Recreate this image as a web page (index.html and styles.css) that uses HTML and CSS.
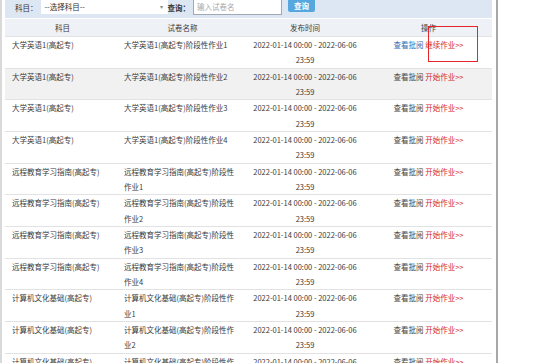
FILE: index.html
```html
<!DOCTYPE html>
<html lang="zh-CN">
<head>
<meta charset="utf-8">
<title>作业列表</title>
<link rel="stylesheet" href="styles.css">
</head>
<body>
<div class="frame">
  <div class="edge"></div>
  <div class="panel">
    <div class="toolbar">
      <span class="label">科目：</span>
      <div class="select"><span>--选择科目--</span><span class="arrow">▾</span></div>
      <span class="label strong">查询：</span>
      <div class="input">输入试卷名</div>
      <div class="btn">查询</div>
    </div>
    <table class="list">
      <colgroup><col class="c1"><col class="c2"><col class="c3"><col class="c4"></colgroup>
      <thead>
        <tr><th>科目</th><th>试卷名称</th><th>发布时间</th><th>操作</th></tr>
      </thead>
      <tbody>
        <tr><td class="subj">大学英语1(高起专)</td><td class="name">大学英语1(高起专)阶段性作业1</td><td class="time">2022-01-14 00:00 - 2022-06-06 23:59</td><td class="ops"><span class="view blue">查看批阅</span> <span class="go">继续作业&gt;&gt;</span></td></tr>
        <tr class="hover"><td class="subj">大学英语1(高起专)</td><td class="name">大学英语1(高起专)阶段性作业2</td><td class="time">2022-01-14 00:00 - 2022-06-06 23:59</td><td class="ops"><span class="view">查看批阅</span> <span class="go">开始作业&gt;&gt;</span></td></tr>
        <tr><td class="subj">大学英语1(高起专)</td><td class="name">大学英语1(高起专)阶段性作业3</td><td class="time">2022-01-14 00:00 - 2022-06-06 23:59</td><td class="ops"><span class="view">查看批阅</span> <span class="go">开始作业&gt;&gt;</span></td></tr>
        <tr><td class="subj">大学英语1(高起专)</td><td class="name">大学英语1(高起专)阶段性作业4</td><td class="time">2022-01-14 00:00 - 2022-06-06 23:59</td><td class="ops"><span class="view">查看批阅</span> <span class="go">开始作业&gt;&gt;</span></td></tr>
        <tr><td class="subj">远程教育学习指南(高起专)</td><td class="name">远程教育学习指南(高起专)阶段性作业1</td><td class="time">2022-01-14 00:00 - 2022-06-06 23:59</td><td class="ops"><span class="view">查看批阅</span> <span class="go">开始作业&gt;&gt;</span></td></tr>
        <tr><td class="subj">远程教育学习指南(高起专)</td><td class="name">远程教育学习指南(高起专)阶段性作业2</td><td class="time">2022-01-14 00:00 - 2022-06-06 23:59</td><td class="ops"><span class="view">查看批阅</span> <span class="go">开始作业&gt;&gt;</span></td></tr>
        <tr><td class="subj">远程教育学习指南(高起专)</td><td class="name">远程教育学习指南(高起专)阶段性作业3</td><td class="time">2022-01-14 00:00 - 2022-06-06 23:59</td><td class="ops"><span class="view">查看批阅</span> <span class="go">开始作业&gt;&gt;</span></td></tr>
        <tr><td class="subj">远程教育学习指南(高起专)</td><td class="name">远程教育学习指南(高起专)阶段性作业4</td><td class="time">2022-01-14 00:00 - 2022-06-06 23:59</td><td class="ops"><span class="view">查看批阅</span> <span class="go">开始作业&gt;&gt;</span></td></tr>
        <tr><td class="subj">计算机文化基础(高起专)</td><td class="name">计算机文化基础(高起专)阶段性作业1</td><td class="time">2022-01-14 00:00 - 2022-06-06 23:59</td><td class="ops"><span class="view">查看批阅</span> <span class="go">开始作业&gt;&gt;</span></td></tr>
        <tr><td class="subj">计算机文化基础(高起专)</td><td class="name">计算机文化基础(高起专)阶段性作业2</td><td class="time">2022-01-14 00:00 - 2022-06-06 23:59</td><td class="ops"><span class="view">查看批阅</span> <span class="go">开始作业&gt;&gt;</span></td></tr>
        <tr><td class="subj">计算机文化基础(高起专)</td><td class="name">计算机文化基础(高起专)阶段性作业3</td><td class="time">2022-01-14 00:00 - 2022-06-06 23:59</td><td class="ops"><span class="view">查看批阅</span> <span class="go">开始作业&gt;&gt;</span></td></tr>
      </tbody>
    </table>
  </div>
  <div class="gap"></div>
  <div class="vline"></div>
</div>
<div class="annot"></div>
</body>
</html>
```
FILE: styles.css
```css
html, body {
  margin: 0;
  padding: 0;
  background: #ffffff;
  overflow: hidden;
}
body {
  position: relative;
  width: 553px;
  height: 363px;
  font-family: "Noto Sans CJK SC", "Noto Sans", sans-serif;
  font-size: 7.5px;
  color: #3a3a3a;
}
.frame {
  display: flex;
  height: 363px;
}
.edge {
  width: 2px;
  background: #d9d9d9;
  flex: none;
}
.panel {
  margin-left: 3px;
  width: 487px;
  flex: none;
}
.gap {
  width: 4px;
  flex: none;
}
.vline {
  width: 2px;
  background: #a8a8a8;
  flex: none;
}
.toolbar {
  height: 18px;
  background: #dde7f3;
  display: flex;
  align-items: flex-start;
  padding-left: 10px;
  overflow: hidden;
}
.label {
  line-height: 16px;
  color: #333;
  white-space: nowrap;
}
.label.strong {
  font-weight: 700;
}
.select {
  margin-left: 3px;
  width: 127px;
  height: 14px;
  background: #fff;
  display: flex;
  align-items: center;
  justify-content: space-between;
  padding: 0 5px 0 4px;
  box-sizing: border-box;
  color: #333;
  line-height: 14px;
}
.select .arrow {
  color: #8a8a8a;
  font-size: 6px;
}
.input {
  margin-left: 3px;
  width: 89px;
  height: 15px;
  box-sizing: border-box;
  background: #fff;
  border: 1px solid #a2a9b2;
  border-top: none;
  color: #a8a8a8;
  padding-left: 3px;
  line-height: 13px;
}
.btn {
  margin-left: 6px;
  width: 27px;
  height: 12px;
  background: #55a7dd;
  border-radius: 0 0 2px 2px;
  color: #fff;
  font-weight: 700;
  text-align: center;
  line-height: 11px;
}
.list {
  margin-top: 1px;
  width: 487px;
  border-collapse: collapse;
  table-layout: fixed;
}
.c1 { width: 115px; }
.c2 { width: 125px; }
.c3 { width: 120px; }
.c4 { width: 127px; }
.list th {
  background: #eef2f7;
  font-weight: 400;
  color: #3a3a3a;
  height: 17px;
  line-height: 17px;
  padding: 0;
  text-align: center;
}
.list td {
  border-top: 1px solid #e2e2e2;
  line-height: 15.33px;
  height: 30.67px;
  padding: 0;
  vertical-align: top;
}
.list tr.hover td {
  background: #f1f1f1;
}
.subj {
  padding-left: 7px !important;
  white-space: nowrap;
}
.name {
  padding-left: 4px !important;
  padding-right: 6px !important;
}
.time {
  text-align: center;
}
.ops {
  text-align: center;
  white-space: nowrap;
}
.view {
  color: #444;
}
.view.blue {
  color: #2d6db5;
}
.go {
  color: #d42a2a;
}
.annot {
  position: absolute;
  left: 428px;
  top: 26px;
  width: 50px;
  height: 36px;
  box-sizing: border-box;
  border: 1.5px solid #e3262a;
}
```
